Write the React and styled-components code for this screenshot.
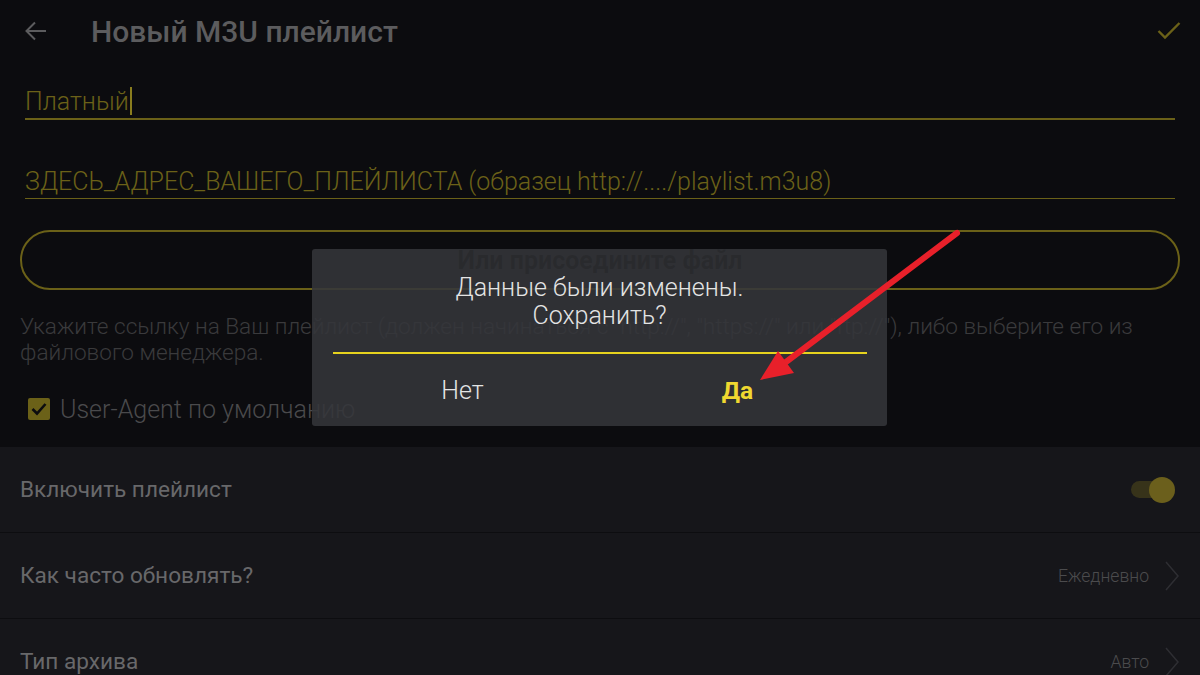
import React from 'react';
import styled, { createGlobalStyle } from 'styled-components';

const GlobalStyle = createGlobalStyle`
  html, body {
    margin: 0;
    padding: 0;
    background: #0c0c0f;
  }
  body {
    font-family: Roboto, "Noto Sans", "Liberation Sans", sans-serif;
  }
`;

const OLIVE = '#6b6118';

const Screen = styled.div`
  position: relative;
  width: 1200px;
  height: 675px;
  overflow: hidden;
  background: #0c0c0f;
  display: flex;
  flex-direction: column;

  & > * {
    flex-shrink: 0;
  }
`;

const Header = styled.div`
  height: 62px;
  display: flex;
  align-items: center;
  padding: 0 19px 0 25px;
`;

const Title = styled.h1`
  margin: 0 0 0 44px;
  flex: 1;
  font-size: 30px;
  font-weight: 500;
  color: #5c5c5e;
`;

const Form = styled.div`
  display: flex;
  flex-direction: column;

  & > * {
    flex-shrink: 0;
  }
`;

const Field = styled.div`
  margin: ${p => p.$top}px 25px 0;
  height: 34px;
  display: flex;
  align-items: center;
  border-bottom: ${p => p.$thick}px solid ${OLIVE};
  font-size: 25px;
  font-weight: 300;
  color: ${OLIVE};
  white-space: nowrap;
`;

const Caret = styled.span`
  display: inline-block;
  width: 2px;
  height: 28px;
  margin-left: 1px;
  background: #8a7d1e;
`;

const AttachButton = styled.div`
  margin: 31px 20px 0;
  height: 56px;
  border: 2px solid ${OLIVE};
  border-radius: 30px;
  display: flex;
  align-items: center;
  justify-content: center;
`;

const AttachLabel = styled.span`
  position: relative;
  z-index: 3;
  font-size: 25px;
  font-weight: 700;
  color: rgba(0, 0, 0, 0.13);
`;

const Hint = styled.p`
  margin: 24px 20px 0;
  font-size: 22.6px;
  font-weight: 300;
  line-height: 26px;
  color: #3a3a3c;
`;

const CheckRow = styled.div`
  margin: 28px 28px 0;
  height: 30px;
  display: flex;
  align-items: center;
  gap: 10px;
  font-size: 25px;
  font-weight: 300;
  color: #4a4a4c;
`;

const CheckBox = styled.span`
  width: 22px;
  height: 22px;
  border-radius: 2px;
  background: ${OLIVE};
  display: flex;
  align-items: center;
  justify-content: center;
`;

const List = styled.div`
  margin-top: 23px;
  flex: 1;
  background: #16161a;
`;

const Row = styled.div`
  height: 85px;
  padding: 0 25px 0 20px;
  display: flex;
  align-items: center;
  border-bottom: 1px solid #0d0d10;
`;

const RowLabel = styled.span`
  flex: 1;
  font-size: 22.6px;
  color: #68686a;
`;

const RowValue = styled.span`
  font-size: 17.6px;
  font-weight: 300;
  color: #4b4b4d;
  margin-right: 16px;
`;

const ChevronIcon = styled.svg`
  margin-right: -4px;
`;

const Toggle = styled.span`
  position: relative;
  width: 44px;
  height: 26px;
  display: flex;
  align-items: center;
`;

const Track = styled.span`
  width: 34px;
  height: 17px;
  border-radius: 9px;
  background: #37331a;
`;

const Thumb = styled.span`
  position: absolute;
  right: 0;
  top: 0;
  width: 26px;
  height: 26px;
  border-radius: 50%;
  background: #6b5f1c;
`;

const Dialog = styled.div`
  position: absolute;
  left: 312px;
  top: 249px;
  width: 575px;
  height: 177px;
  border-radius: 3px;
  background: rgba(52, 53, 58, 0.88);
  z-index: 2;
  display: flex;
  flex-direction: column;
`;

const DialogText = styled.p`
  margin: 0;
  padding-top: 25px;
  text-align: center;
  font-size: 25px;
  font-weight: 300;
  line-height: 28px;
  color: #e4e4e4;
`;

const Divider = styled.div`
  margin: 22px 20px 0 21px;
  height: 2px;
  background: #e6d21e;
`;

const Actions = styled.div`
  flex: 1;
  display: grid;
  grid-template-columns: 1fr 1fr;
  padding: 0 20px 0 21px;
`;

const Action = styled.span`
  display: flex;
  align-items: center;
  justify-content: center;
  padding-left: ${p => (p.$primary ? '8px' : '0')};
  padding-right: ${p => (p.$primary ? '0' : '8px')};
  font-size: ${p => (p.$primary ? '24.5px' : '25px')};
  font-weight: ${p => (p.$primary ? 700 : 300)};
  color: ${p => (p.$primary ? '#f0d830' : '#e4e4e4')};
`;

const Overlay = styled.svg`
  position: absolute;
  left: 0;
  top: 0;
  z-index: 4;
  pointer-events: none;
`;

const Chevron = () => (
  <ChevronIcon width="14" height="30" viewBox="0 0 14 30">
    <polyline points="1,1 13,15 1,29" fill="none" stroke="#2e2e33" strokeWidth="1.5" />
  </ChevronIcon>
);

const App = () => {
  return (
    <Screen>
      <GlobalStyle />

      <Header>
        <svg width="22" height="20" viewBox="0 0 22 20">
          <path d="M21 10H2M10 1.5L1.5 10 10 18.5" fill="none" stroke="#5c5c5e" strokeWidth="2" />
        </svg>
        <Title>Новый M3U плейлист</Title>
        <svg width="24" height="18" viewBox="0 0 24 18">
          <polyline points="1.5,9 8,15.5 22.5,1" fill="none" stroke={OLIVE} strokeWidth="2.4" />
        </svg>
      </Header>

      <Form>
        <Field $top={22} $thick={2}>
          Платный
          <Caret />
        </Field>
        <Field $top={44} $thick={1}>
          ЗДЕСЬ_АДРЕС_ВАШЕГО_ПЛЕЙЛИСТА (образец http://..../playlist.m3u8)
        </Field>

        <AttachButton>
          <AttachLabel>Или присоедините файл</AttachLabel>
        </AttachButton>

        <Hint>
          Укажите ссылку на Ваш плейлист (должен начинаться с "http://", "https://" или "ftp://"), либо выберите его из
          <br />
          файлового менеджера.
        </Hint>

        <CheckRow>
          <CheckBox>
            <svg width="16" height="14" viewBox="0 0 16 14">
              <polyline points="1.5,7 6,11.5 14.5,2" fill="none" stroke="#0c0c0f" strokeWidth="2.6" />
            </svg>
          </CheckBox>
          User-Agent по умолчанию
        </CheckRow>
      </Form>

      <List>
        <Row>
          <RowLabel>Включить плейлист</RowLabel>
          <Toggle>
            <Track />
            <Thumb />
          </Toggle>
        </Row>
        <Row>
          <RowLabel>Как часто обновлять?</RowLabel>
          <RowValue>Ежедневно</RowValue>
          <Chevron />
        </Row>
        <Row>
          <RowLabel>Тип архива</RowLabel>
          <RowValue>Авто</RowValue>
          <Chevron />
        </Row>
      </List>

      <Dialog>
        <DialogText>
          Данные были изменены.
          <br />
          Сохранить?
        </DialogText>
        <Divider />
        <Actions>
          <Action>Нет</Action>
          <Action $primary>Да</Action>
        </Actions>
      </Dialog>

      <Overlay width="1200" height="675" viewBox="0 0 1200 675">
        <line x1="957" y1="233" x2="782" y2="365" stroke="#e8202a" strokeWidth="6" strokeLinecap="round" />
        <polygon points="760,380 778,351 794,373" fill="#e8202a" />
      </Overlay>
    </Screen>
  );
};

export default App;
